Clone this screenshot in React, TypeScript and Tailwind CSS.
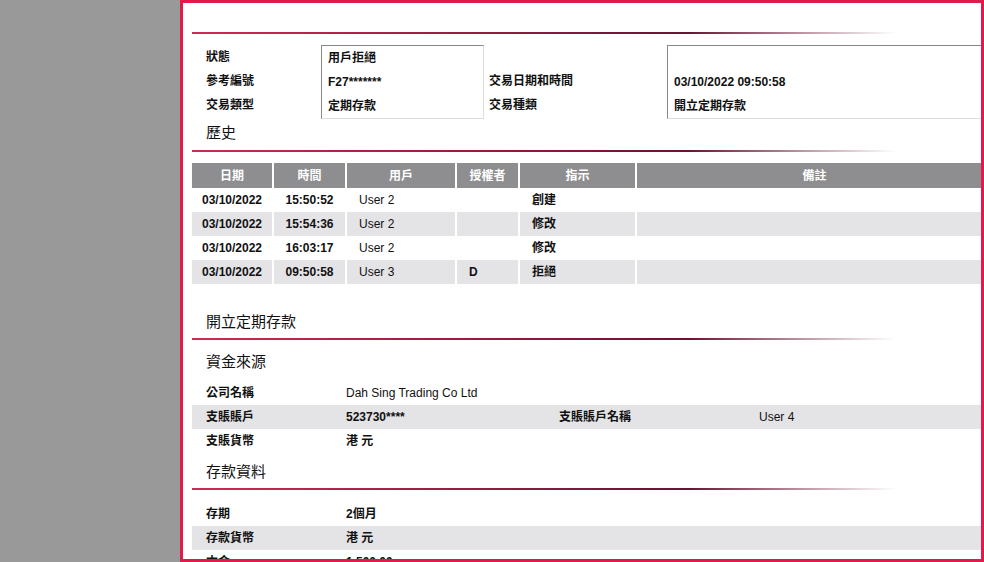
const font = { fontFamily: '"Liberation Sans", Arial, "Noto Sans CJK TC", sans-serif' }

function Rule() {
  return <div className="h-[2px] w-full bg-[linear-gradient(to_right,#cf2a52_0%,#6a1232_62%,rgba(255,255,255,0)_88%)]" />
}

function Heading({ children, top }: { children: string; top: string }) {
  return (
    <div className={`flex ${top} text-[15px] leading-[24px]`}>
      <div className="w-[14px] shrink-0" />
      <div>{children}</div>
    </div>
  )
}

const cols = ["w-[80px]", "w-[71px]", "w-[108px]", "w-[61px]", "w-[115px]", "flex-1"]
const heads = ["日期", "時間", "用戶", "授權者", "指示", "備註"]
const rows = [
  ["03/10/2022", "15:50:52", "User 2", "", "創建", ""],
  ["03/10/2022", "15:54:36", "User 2", "", "修改", ""],
  ["03/10/2022", "16:03:17", "User 2", "", "修改", ""],
  ["03/10/2022", "09:50:58", "User 3", "D", "拒絕", ""],
]
const align = ["justify-center", "justify-center", "pl-3", "pl-3", "pl-3", ""]

function InfoRow({ cells, gray }: { cells: string[]; gray?: boolean }) {
  return (
    <div className={`flex h-[24px] items-center text-[12px] font-bold ${gray ? "bg-[#e4e4e6]" : ""}`}>
      <div className="w-[154px] pl-[14px]">{cells[0]}</div>
      <div className={`w-[213px] ${cells[1].startsWith("Dah") ? "font-normal" : ""}`}>{cells[1]}</div>
      <div className="w-[200px]">{cells[2] ?? ""}</div>
      <div className="font-normal">{cells[3] ?? ""}</div>
    </div>
  )
}

export default function App() {
  return (
    <div className="flex h-[562px] w-[984px] overflow-hidden bg-white text-[#111]" style={font}>
      <div className="w-[180px] shrink-0 bg-[#999999]" />
      <div className="flex-1 overflow-hidden border-[3px] border-[#e3194b] pl-[9px] pt-[29px]">
        <div className="w-[800px]">
          <Rule />
          <div className="mt-[11px] flex text-[12px] font-bold">
            <div className="w-[129px] pl-[14px] leading-[24px]">
              <div>狀態</div><div>參考編號</div><div>交易類型</div>
            </div>
            <div className="h-[74px] w-[163px] border border-t-[#888] border-l-[#888] border-r-[#ddd] border-b-[#ddd] px-[6px] leading-[24px]">
              <div>用戶拒絕</div><div>F27*******</div><div>定期存款</div>
            </div>
            <div className="w-[183px] pl-[5px] leading-[24px]">
              <div>&nbsp;</div><div>交易日期和時間</div><div>交易種類</div>
            </div>
            <div className="h-[74px] flex-1 border border-r-0 border-t-[#888] border-l-[#888] border-b-[#ddd] px-[6px] leading-[24px]">
              <div>&nbsp;</div><div>03/10/2022 09:50:58</div><div>開立定期存款</div>
            </div>
          </div>
          <Heading top="pt-[2px]">歷史</Heading>
          <div className="mt-[5px]"><Rule /></div>
          <div className="mt-[11px] text-[12px] font-bold">
            <div className="flex h-[25px] gap-[2px] text-white">
              {heads.map((h, i) => (
                <div key={h} className={`${cols[i]} flex items-center justify-center bg-[#8e8e90]`}>{h}</div>
              ))}
            </div>
            {rows.map((r, ri) => (
              <div key={ri} className="flex h-[24px] gap-[2px]">
                {r.map((c, i) => (
                  <div key={i} className={`${cols[i]} flex items-center ${align[i]} ${ri % 2 ? "bg-[#e4e4e6]" : "bg-white"} ${i === 2 ? "font-normal" : ""}`}>{c}</div>
                ))}
              </div>
            ))}
          </div>
          <Heading top="pt-[26px]">開立定期存款</Heading>
          <div className="mt-[4px]"><Rule /></div>
          <Heading top="pt-[10px]">資金來源</Heading>
          <div className="mt-[7px]">
            <InfoRow cells={["公司名稱", "Dah Sing Trading Co Ltd"]} />
            <InfoRow gray cells={["支賬賬戶", "523730****", "支賬賬戶名稱", "User 4"]} />
            <InfoRow cells={["支賬貨幣", "港 元"]} />
          </div>
          <Heading top="pt-[7px]">存款資料</Heading>
          <div className="mt-[4px]"><Rule /></div>
          <div className="mt-[12px]">
            <InfoRow cells={["存期", "2個月"]} />
            <InfoRow gray cells={["存款貨幣", "港 元"]} />
            <InfoRow cells={["本金", "1,500.00"]} />
          </div>
        </div>
      </div>
    </div>
  )
}
